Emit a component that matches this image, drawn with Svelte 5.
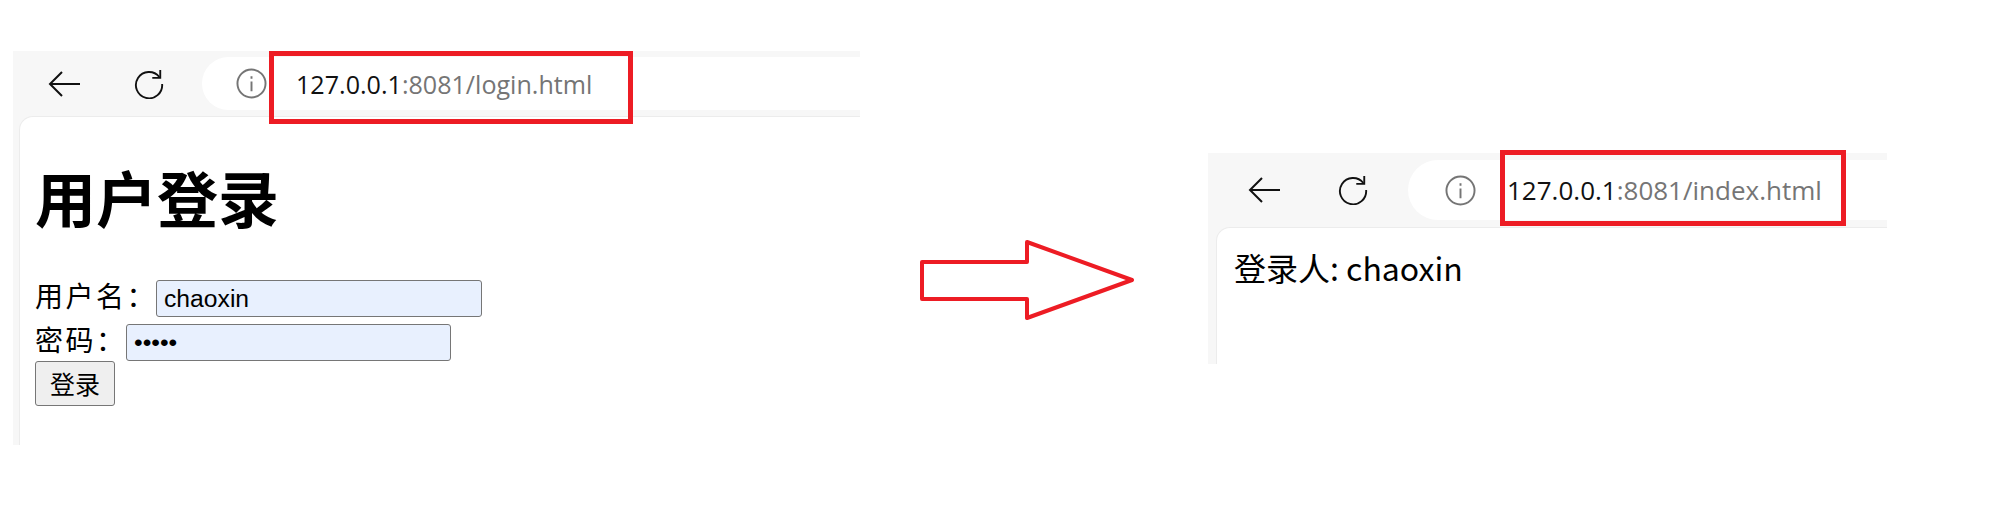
<script>
  const windows = {
    login: { host: '127.0.0.1', rest: ':8081/login.html' },
    index: { host: '127.0.0.1', rest: ':8081/index.html' }
  };
</script>

{#snippet toolbar(url)}
  <div class="toolbar">
    <svg class="icon back" viewBox="0 0 32 26" fill="none" stroke="#111" stroke-width="2">
      <path d="M32 13H2M14 1L2 13l12 12" />
    </svg>
    <svg class="icon reload" viewBox="0 0 32 32" fill="none" stroke="#111" stroke-width="2">
      <path d="M27 8.5A14 14 0 1 0 30 16" />
      <path d="M28 1v8.500h-8.500" />
    </svg>
    <div class="pill">
      <svg class="icon info" viewBox="0 0 32 32" fill="none" stroke="#757575" stroke-width="2">
        <circle cx="16" cy="16" r="14.500" />
        <path d="M16 14v10M16 8.500v2.500" />
      </svg>
      <span class="url"><span class="host">{url.host}</span>{url.rest}</span>
    </div>
    <div class="highlight"></div>
  </div>
{/snippet}

<div class="canvas">
  <section class="window window--login">
    {@render toolbar(windows.login)}
    <div class="page">
      <h1>用户登录</h1>
      <div class="row row--user">
        <label for="user">用户名：</label>
        <input id="user" class="field" type="text" value="chaoxin" />
      </div>
      <div class="row row--pass">
        <label for="pass">密码：</label>
        <input id="pass" class="field" type="password" value="12345" />
      </div>
      <button class="submit">登录</button>
    </div>
  </section>

  <svg class="arrow" viewBox="0 0 215 81" fill="none" stroke="#ed1c24" stroke-width="4" stroke-linejoin="round">
    <path d="M2 22H107V2L212 40 107 78V59H2Z" />
  </svg>

  <section class="window window--index">
    {@render toolbar(windows.index)}
    <div class="page">
      <p class="who">登录人: chaoxin</p>
    </div>
  </section>
</div>

<style>
  :global(body) {
    background: #ffffff;
  }

  .canvas {
    display: flex;
    align-items: flex-start;
    width: 1996px;
    height: 517px;
    padding-left: 13px;
    box-sizing: border-box;
    overflow: hidden;
  }

  .window {
    position: relative;
    display: flex;
    flex-direction: column;
    flex-shrink: 0;
    background: #f7f7f7;
  }

  .window--login {
    width: 847px;
    height: 394px;
    margin-top: 51px;
    --pill-h: 53px;
    --pad-top: 6px;
    --bar-h: 65px;
    --pad-left: 35px;
    --gap-a: 53px;
    --gap-b: 37px;
    --pill-pad: 34px;
    --gap-c: 29px;
    --url-size: 25.1px;
    --box-left: 256px;
    --box-top: 0px;
    --box-w: 364px;
    --box-h: 73px;
    --page-gutter: 6px;
  }

  .window--index {
    width: 679px;
    height: 211px;
    margin-top: 153px;
    margin-left: 73px;
    --pill-h: 60px;
    --pad-top: 7px;
    --bar-h: 74px;
    --pad-left: 40px;
    --gap-a: 57px;
    --gap-b: 39px;
    --pill-pad: 37px;
    --gap-c: 31px;
    --url-size: 26px;
    --box-left: 292px;
    --box-top: -3px;
    --box-w: 346px;
    --box-h: 76px;
    --page-gutter: 8px;
  }

  .toolbar {
    display: flex;
    align-items: flex-start;
    height: var(--bar-h);
    flex-shrink: 0;
    padding: var(--pad-top) 0 0 var(--pad-left);
    box-sizing: border-box;
  }

  .icon {
    display: block;
    flex-shrink: 0;
  }

  .back {
    width: 32px;
    height: 26px;
    margin-top: calc((var(--pill-h) - 26px) / 2);
    margin-right: var(--gap-a);
  }

  .reload {
    width: 32px;
    height: 30px;
    margin-top: calc((var(--pill-h) - 30px) / 2);
    margin-right: var(--gap-b);
  }

  .pill {
    display: flex;
    flex: 1;
    align-items: center;
    gap: var(--gap-c);
    height: var(--pill-h);
    padding-left: var(--pill-pad);
    background: #ffffff;
    border-radius: 30px 0 0 30px;
  }

  .info {
    width: 31px;
    height: 31px;
  }

  .url {
    font-family: "Open Sans", "Noto Sans", sans-serif;
    font-size: var(--url-size);
    color: #757575;
    white-space: nowrap;
  }

  .host {
    color: #111111;
  }

  .highlight {
    position: absolute;
    left: var(--box-left);
    top: var(--box-top);
    width: var(--box-w);
    height: var(--box-h);
    box-sizing: border-box;
    border: 5px solid #ed1c24;
  }

  .page {
    flex: 1;
    margin-left: var(--page-gutter);
    background: #ffffff;
    border-top: 1px solid #ececec;
    border-left: 1px solid #ececec;
    border-top-left-radius: 14px;
    font-family: "Liberation Sans", "Noto Sans CJK SC", sans-serif;
    color: #000000;
  }

  .window--login .page {
    padding: 0 0 0 15px;
  }

  h1 {
    margin: 50px 0 43px;
    font-size: 61px;
    line-height: 70px;
    font-weight: 700;
    font-family: "Liberation Sans", "Noto Sans CJK SC", sans-serif;
  }

  .row {
    display: flex;
    align-items: center;
    height: 37px;
  }

  .row--pass {
    margin-top: 7px;
  }

  label {
    padding-bottom: 8px;
    font-size: 28px;
    letter-spacing: 2.500px;
    white-space: nowrap;
  }

  .row--user label {
    width: 121px;
  }

  .row--pass label {
    width: 91px;
  }

  .field {
    height: 37px;
    box-sizing: border-box;
    padding: 0 7px;
    background: #e8f0fe;
    border: 1px solid #767676;
    border-radius: 3px;
    font-family: "Liberation Sans", sans-serif;
    font-size: 24.700px;
    color: #000000;
  }

  .row--user .field {
    width: 326px;
  }

  .row--pass .field {
    width: 325px;
  }

  .submit {
    display: block;
    width: 80px;
    height: 45px;
    padding: 0 0 2px;
    background: #efefef;
    border: 1px solid #767676;
    border-radius: 3px;
    font-family: "Liberation Sans", "Noto Sans CJK SC", sans-serif;
    font-size: 25px;
    color: #000000;
  }

  .arrow {
    flex-shrink: 0;
    width: 215px;
    height: 81px;
    margin-top: 240px;
    margin-left: 60px;
  }

  .who {
    margin: 19px 0 0 17px;
    font-family: "Noto Sans CJK SC", sans-serif;
    font-size: 32px;
    line-height: 40px;
  }
</style>
